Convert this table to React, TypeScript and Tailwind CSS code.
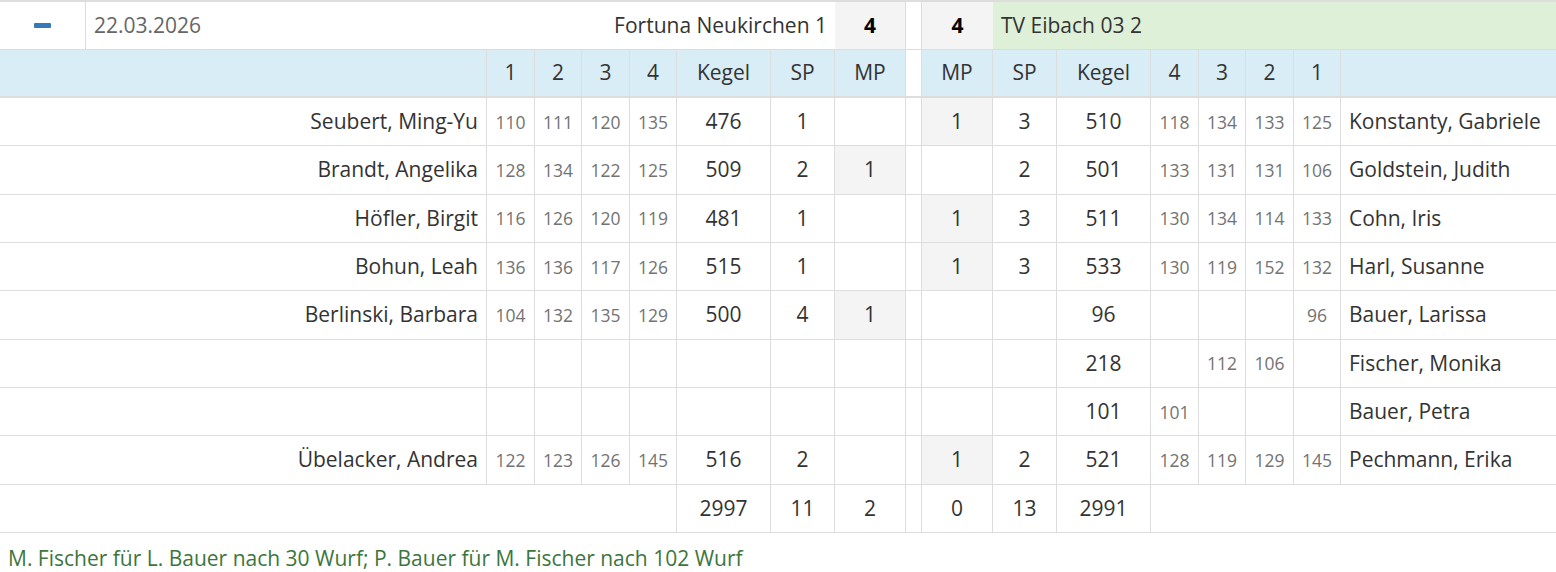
import React from "react";

type Row = {
  ln: string;
  lg: string[];
  lk: string;
  lsp: string;
  lmp: string;
  rmp: string;
  rsp: string;
  rk: string;
  rg: string[];
  rn: string;
};

const rows: Row[] = [
  { ln: "Seubert, Ming-Yu", lg: ["110", "111", "120", "135"], lk: "476", lsp: "1", lmp: "", rmp: "1", rsp: "3", rk: "510", rg: ["118", "134", "133", "125"], rn: "Konstanty, Gabriele" },
  { ln: "Brandt, Angelika", lg: ["128", "134", "122", "125"], lk: "509", lsp: "2", lmp: "1", rmp: "", rsp: "2", rk: "501", rg: ["133", "131", "131", "106"], rn: "Goldstein, Judith" },
  { ln: "Höfler, Birgit", lg: ["116", "126", "120", "119"], lk: "481", lsp: "1", lmp: "", rmp: "1", rsp: "3", rk: "511", rg: ["130", "134", "114", "133"], rn: "Cohn, Iris" },
  { ln: "Bohun, Leah", lg: ["136", "136", "117", "126"], lk: "515", lsp: "1", lmp: "", rmp: "1", rsp: "3", rk: "533", rg: ["130", "119", "152", "132"], rn: "Harl, Susanne" },
  { ln: "Berlinski, Barbara", lg: ["104", "132", "135", "129"], lk: "500", lsp: "4", lmp: "1", rmp: "", rsp: "", rk: "96", rg: ["", "", "", "96"], rn: "Bauer, Larissa" },
  { ln: "", lg: ["", "", "", ""], lk: "", lsp: "", lmp: "", rmp: "", rsp: "", rk: "218", rg: ["", "112", "106", ""], rn: "Fischer, Monika" },
  { ln: "", lg: ["", "", "", ""], lk: "", lsp: "", lmp: "", rmp: "", rsp: "", rk: "101", rg: ["101", "", "", ""], rn: "Bauer, Petra" },
  { ln: "Übelacker, Andrea", lg: ["122", "123", "126", "145"], lk: "516", lsp: "2", lmp: "", rmp: "1", rsp: "2", rk: "521", rg: ["128", "119", "129", "145"], rn: "Pechmann, Erika" },
];

const grid =
  "grid grid-cols-[86px_401px_48px_47px_48px_47px_94px_64px_71px_16px_71px_64px_94px_48px_47px_48px_47px_215px]";

const cell = "flex items-center justify-center border-r border-[#ddd]";
const small = "flex items-center justify-center border-r border-[#ddd] text-[17.5px] text-[#737373]";

function BodyRow({ r }: { r: Row }) {
  return (
    <div className={`${grid} h-[48.33px] border-b border-[#ddd]`}>
      <div className="col-span-2 flex items-center justify-end border-r border-[#ddd] px-2">{r.ln}</div>
      {r.lg.map((g, i) => (
        <div key={"l" + i} className={small}>
          {g}
        </div>
      ))}
      <div className={cell}>{r.lk}</div>
      <div className={cell}>{r.lsp}</div>
      <div className={`${cell} ${r.lmp ? "bg-[#f4f4f4]" : ""}`}>{r.lmp}</div>
      <div className={cell}></div>
      <div className={`${cell} ${r.rmp ? "bg-[#f4f4f4]" : ""}`}>{r.rmp}</div>
      <div className={cell}>{r.rsp}</div>
      <div className={cell}>{r.rk}</div>
      {r.rg.map((g, i) => (
        <div key={"r" + i} className={small}>
          {g}
        </div>
      ))}
      <div className="flex items-center justify-start whitespace-nowrap px-2">{r.rn}</div>
    </div>
  );
}

export default function App() {
  return (
    <div className="w-[1556px] bg-white font-['Open_Sans',sans-serif] text-[21px] text-[#333]">
      <div className="border-t-2 border-[#ddd]">
        {/* Match row */}
        <div className={`${grid} h-[48px] border-b border-[#ddd]`}>
          <div className="flex items-center justify-center border-r border-[#ddd]">
            <div className="h-[5px] w-[17px] rounded-[1px] bg-[#337ab7]" />
          </div>
          <div className="col-span-7 flex items-center justify-between px-2">
            <span className="text-[#666]">22.03.2026</span>
            <span>Fortuna Neukirchen 1</span>
          </div>
          <div className="flex items-center justify-center border-r border-[#ddd] bg-[#f4f4f4] font-bold text-black">4</div>
          <div className="border-r border-[#ddd]"></div>
          <div className="flex items-center justify-center bg-[#f4f4f4] font-bold text-black">4</div>
          <div className="col-span-7 flex items-center bg-[#dff0d8] px-2">TV Eibach 03 2</div>
        </div>

        {/* Header row */}
        <div className={`${grid} h-[48px] border-b-2 border-[#ddd] bg-[#d9edf7]`}>
          <div className="col-span-2 border-r border-[#ddd]"></div>
          <div className={cell}>1</div>
          <div className={cell}>2</div>
          <div className={cell}>3</div>
          <div className={cell}>4</div>
          <div className={cell}>Kegel</div>
          <div className={cell}>SP</div>
          <div className={cell}>MP</div>
          <div className="border-r border-[#ddd] bg-white"></div>
          <div className={cell}>MP</div>
          <div className={cell}>SP</div>
          <div className={cell}>Kegel</div>
          <div className={cell}>4</div>
          <div className={cell}>3</div>
          <div className={cell}>2</div>
          <div className={cell}>1</div>
          <div></div>
        </div>

        {rows.map((r, i) => (
          <BodyRow key={i} r={r} />
        ))}

        {/* Sum row */}
        <div className={`${grid} h-[48.33px] border-b border-[#ddd]`}>
          <div className="col-span-6 border-r border-[#ddd]"></div>
          <div className={cell}>2997</div>
          <div className={cell}>11</div>
          <div className={cell}>2</div>
          <div className={cell}></div>
          <div className={cell}>0</div>
          <div className={cell}>13</div>
          <div className={cell}>2991</div>
          <div className="col-span-5"></div>
        </div>

        <div className="px-2 pt-[10px] text-[#3c763d]">
          M. Fischer für L. Bauer nach 30 Wurf; P. Bauer für M. Fischer nach 102 Wurf
        </div>
      </div>
    </div>
  );
}
